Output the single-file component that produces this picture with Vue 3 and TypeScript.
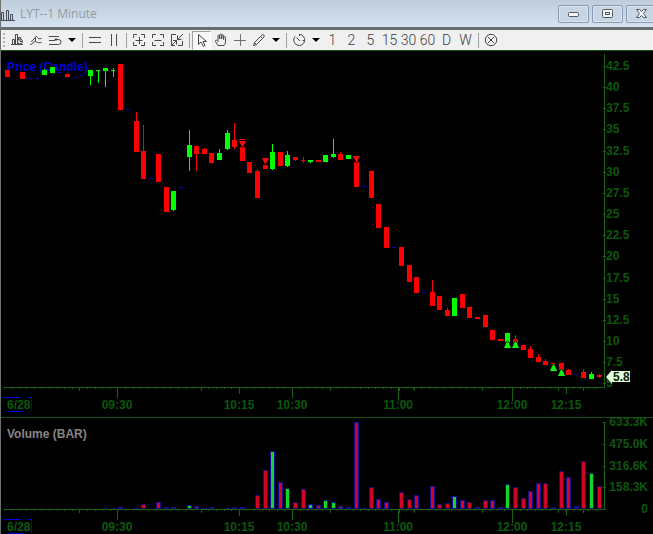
<script setup lang="ts">
type Tone = 'up' | 'down' | 'flat'
// slot, tone, body top, body bottom, wick top, wick bottom
type Candle = [number, Tone, number, number, number, number]
type Bar = [number, Tone, number]

const slotX = (slot: number): number => Math.floor(7 + slot * 7.59)

const u: Tone = 'up'
const d: Tone = 'down'
const f: Tone = 'flat'

const candles: Candle[] = [
  [0, d, 70, 77, 70, 77], [2, d, 72, 79, 72, 79], [3, f, 78, 79, 78, 79], [4, f, 78, 79, 75, 81],
  [5, u, 70, 75, 69, 75], [6, u, 67, 73, 67, 73], [7, f, 72, 73, 72, 73], [8, d, 74, 77, 74, 77],
  [9, f, 77, 78, 77, 78], [10, f, 75, 76, 75, 76], [11, u, 70, 76, 70, 85], [12, u, 70, 71, 70, 83],
  [13, u, 68, 71, 68, 87], [14, u, 70, 71, 68, 77], [15, d, 64, 110, 64, 110], [16, f, 109, 110, 109, 110],
  [17, d, 121, 152, 112, 152], [18, d, 151, 179, 125, 179], [19, f, 178, 179, 178, 179], [20, d, 154, 182, 154, 182],
  [21, d, 187, 212, 187, 212], [22, u, 191, 210, 191, 211], [23, f, 187, 188, 187, 188], [24, u, 145, 157, 130, 171],
  [25, d, 146, 154, 146, 171], [26, d, 149, 154, 148, 154], [27, d, 153, 163, 153, 163], [28, u, 153, 160, 149, 160],
  [29, u, 133, 149, 130, 150], [30, d, 140, 147, 123, 149], [31, d, 147, 161, 147, 161], [32, d, 162, 173, 162, 173],
  [33, d, 171, 198, 169, 198], [34, d, 165, 169, 165, 169], [35, u, 152, 169, 144, 170], [36, d, 152, 166, 152, 166],
  [37, u, 155, 166, 151, 167], [38, d, 157, 160, 157, 161], [39, d, 160, 161, 157, 163], [40, u, 160, 162, 160, 163],
  [41, d, 160, 162, 160, 162], [42, u, 155, 162, 155, 162], [43, u, 154, 157, 139, 158], [44, d, 154, 160, 152, 160],
  [45, u, 155, 159, 155, 159], [46, d, 162, 187, 162, 187], [47, f, 186, 187, 186, 187], [48, d, 171, 198, 171, 198],
  [49, d, 204, 228, 204, 228], [50, d, 227, 248, 227, 248], [51, f, 247, 248, 247, 248], [52, d, 247, 266, 247, 266],
  [53, d, 265, 282, 265, 282], [54, d, 277, 293, 277, 293], [55, f, 292, 293, 292, 293], [56, d, 292, 306, 280, 306],
  [57, d, 296, 310, 296, 310], [58, d, 310, 316, 308, 316], [59, u, 298, 316, 298, 316], [60, d, 294, 308, 294, 308],
  [61, d, 307, 318, 307, 318], [62, d, 317, 319, 317, 319], [63, d, 315, 327, 315, 327], [64, d, 330, 340, 330, 340],
  [65, d, 339, 341, 339, 341], [66, u, 333, 342, 333, 342], [67, d, 339, 343, 335, 343], [68, d, 345, 350, 345, 350],
  [69, d, 349, 358, 346, 358], [70, d, 357, 362, 354, 362], [71, d, 361, 365, 359, 365], [72, d, 363, 364, 363, 364],
  [73, d, 363, 370, 363, 370], [74, d, 370, 375, 369, 375], [75, f, 374, 375, 374, 375], [76, d, 372, 378, 369, 378],
  [77, u, 374, 379, 372, 379], [78, d, 375, 377, 374, 378],
]

const sellMarks: [number, number][] = [[31, 141], [34, 158], [46, 156]]
const buyMarks: [number, number][] = [[66, 348], [67, 348], [72, 371], [73, 376]]

const bars: Bar[] = [
  [13, f, 508], [14, f, 508], [15, f, 507], [17, f, 508], [18, d, 504], [20, d, 502], [21, f, 507], [22, f, 507],
  [24, u, 505], [25, d, 506], [26, f, 508], [27, f, 507], [29, f, 508], [30, f, 507], [31, f, 507], [33, d, 495],
  [34, d, 470], [35, u, 451], [36, d, 482], [37, u, 488], [38, d, 502], [39, d, 489], [40, u, 504], [41, d, 505],
  [42, u, 500], [43, u, 502], [44, d, 506], [45, f, 507], [46, d, 422], [47, f, 508], [48, d, 487], [49, d, 499],
  [50, d, 502], [52, d, 492], [53, d, 499], [54, d, 495], [56, d, 486], [57, d, 504], [58, d, 503], [59, u, 496],
  [60, d, 500], [61, d, 502], [62, f, 507], [63, d, 500], [64, d, 500], [65, f, 507], [66, u, 484], [67, d, 487],
  [68, d, 498], [69, d, 491], [70, d, 483], [71, d, 483], [72, f, 507], [73, d, 471], [74, d, 477], [75, f, 506],
  [76, d, 461], [77, u, 473], [78, d, 486],
]

const priceLabels = Array.from({ length: 16 }, (_, i) => ({
  text: String(42.5 - i * 2.5),
  y: 66 + Math.round(i * 21.15),
}))

const volumeLabels = [
  { text: '633.3K', y: 422 },
  { text: '475.0K', y: 444 },
  { text: '316.6K', y: 466 },
  { text: '158.3K', y: 487 },
  { text: '0', y: 509 },
]

const times = [
  { text: '09:30', x: 117, tick: 10 },
  { text: '10:15', x: 239, tick: 6 },
  { text: '10:30', x: 292, tick: 10 },
  { text: '11:00', x: 398, tick: 13 },
  { text: '12:00', x: 512, tick: 13 },
  { text: '12:15', x: 566, tick: 6 },
]

const minorTicks = Array.from({ length: 79 }, (_, i) => slotX(i) - 3)
const mediumTicks = [79, 201, 330, 399, 414, 482, 558, 583]

const periods = ['1', '2', '5', '15', '30', '60', 'D', 'W']
const axes = [387, 509]
</script>

<template>
  <main class="window">
    <header class="titlebar">
      <svg class="logo" width="16" height="16" viewBox="0 0 16 16" aria-hidden="true">
        <path d="M0 14.500H14M0.500 14V6.500H2.500V14M5.500 14V4.500H7.500V14M9.500 14V8.500H11.500V14" />
      </svg>
      <h1>LYT--1 Minute</h1>
      <div class="controls">
        <button type="button" aria-label="Minimize">
          <svg width="13" height="11" viewBox="0 0 13 11"><rect x="1.500" y="4.500" width="10" height="4" rx="1" /></svg>
        </button>
        <button type="button" aria-label="Restore">
          <svg width="13" height="11" viewBox="0 0 13 11"><rect x="1.500" y="1.500" width="10" height="8" rx="1" /><rect x="4.500" y="4.500" width="4" height="2" /></svg>
        </button>
        <button type="button" aria-label="Close">
          <svg width="13" height="11" viewBox="0 0 13 11"><path d="M1.500 1.500H4.500L6.500 3.500L8.500 1.500H11.500L8.500 5.500L11.500 9.500H8.500L6.500 7.500L4.500 9.500H1.500L4.500 5.500Z" /></svg>
        </button>
      </div>
    </header>

    <nav class="toolbar" aria-label="Chart tools">
      <span class="grip"></span>
      <button type="button" class="tool" aria-label="Chart style">
        <svg viewBox="0 0 16 16"><path d="M2 12.500H14M3.500 12V7.500H5.500V12M6.500 12V2.500H8.500V12M9.500 7V5.500H11.500V7" /><circle cx="11" cy="9.500" r="2.500" /><path d="M11 8V9.500H13" /></svg>
      </button>
      <button type="button" class="tool" aria-label="Studies">
        <svg viewBox="0 0 16 16"><path d="M2 12.500C5 12.500 5 9.500 7 9.500C9 9.500 9 11.500 13.500 10.500M3 9.500C5.500 9.500 6.500 4.500 8.500 4.500C9.500 4.500 9 7.500 13.500 6.500M7.500 6V9" /></svg>
      </button>
      <button type="button" class="tool" aria-label="Line settings">
        <svg viewBox="0 0 16 16"><path d="M2 4.500H12M2 8.500H8M2 12.500H9M9 12.500H11.500A2.500 2.500 0 0 0 11.500 7.500H8M9.500 6L8 7.500L9.500 9" /></svg>
      </button>
      <button type="button" class="caret" aria-label="More line settings"><svg width="8" height="4" viewBox="0 0 8 4"><path d="M0 0H8L4 4Z" /></svg></button>
      <span class="sep"></span>
      <button type="button" class="tool" aria-label="Horizontal lines"><svg viewBox="0 0 16 16"><path d="M2 5.500H14M2 10.500H14" /></svg></button>
      <button type="button" class="tool" aria-label="Vertical lines"><svg viewBox="0 0 16 16"><path d="M5.500 2V14M10.500 2V14" /></svg></button>
      <span class="sep"></span>
      <button type="button" class="tool" aria-label="Expand">
        <svg viewBox="0 0 16 16"><path d="M2.500 6V2.500H6M10 2.500H13.500V6M13.500 10V13.500H10M6 13.500H2.500V10M4.500 8.500H11.500M8.500 5V12" /></svg>
      </button>
      <button type="button" class="tool" aria-label="Compress">
        <svg viewBox="0 0 16 16"><path d="M2.500 6V2.500H6M10 2.500H13.500V6M13.500 10V13.500H10M6 13.500H2.500V10M4.500 8.500H11.500" /></svg>
      </button>
      <button type="button" class="tool" aria-label="Fit">
        <svg viewBox="0 0 16 16"><path d="M7 2.500H2.500V13.500H6M13.500 9V13.500H9M14 2L8.500 7.500M8.500 3.500V7.500H12.500M2.500 13.500L7.500 8.500M4 8.500H7.500V12.500" /></svg>
      </button>
      <span class="sep"></span>
      <button type="button" class="tool pressed" aria-label="Pointer" aria-pressed="true">
        <svg viewBox="0 0 16 16"><path d="M4.500 2.500V12.500L7 10L9.500 14.500L11 13.500L9 9.500H12.500Z" /></svg>
      </button>
      <button type="button" class="tool" aria-label="Pan">
        <svg viewBox="0 0 16 16"><path d="M5 13.500L2.500 9.500C2 8 3.500 7.500 5 9.500V4C5 2.800 6.500 2.800 6.700 4V7V3C7 1.800 8.500 1.800 8.700 3V7V3.500C9 2.300 10.500 2.500 10.600 3.700V7.500V5C11 4 12.500 4.300 12.500 5.500V10C12.500 12 11.500 12.500 11 13.500Z" /></svg>
      </button>
      <button type="button" class="tool" aria-label="Crosshair"><svg class="light" viewBox="0 0 16 16"><path d="M2 8.500H14M8.500 2V14" /></svg></button>
      <button type="button" class="tool" aria-label="Draw">
        <svg viewBox="0 0 16 16"><path d="M2.500 13.500L3.500 10.500L11 3C12 2 14 3.500 13 5L5.500 12.500Z M3.500 10.500L5.500 12.500M9.500 4.500L11.500 6.500" /></svg>
      </button>
      <button type="button" class="caret" aria-label="More drawing tools"><svg width="8" height="4" viewBox="0 0 8 4"><path d="M0 0H8L4 4Z" /></svg></button>
      <span class="sep"></span>
      <button type="button" class="tool" aria-label="Interval">
        <svg viewBox="0 0 16 16"><path d="M8 2.500A5.500 5.500 0 1 1 4 4.500M8.500 2V4M5.500 5.500L8.500 8.500M11.500 8.500H13" /><path d="M8 8.500H9" /></svg>
      </button>
      <button type="button" class="caret" aria-label="More intervals"><svg width="8" height="4" viewBox="0 0 8 4"><path d="M0 0H8L4 4Z" /></svg></button>
      <button v-for="p in periods" :key="p" type="button" class="tool period">{{ p }}</button>
      <span class="sep"></span>
      <button type="button" class="tool" aria-label="Stop">
        <svg viewBox="0 0 16 16"><circle cx="8" cy="8" r="5.700" /><path d="M5 5L11 11M11 5L5 11" /></svg>
      </button>
    </nav>

    <section class="panel" aria-label="Price">
      <svg class="chart" viewBox="1 51 652 366">
        <g class="axis">
          <rect x="604" y="54" width="1" height="334" />
          <rect v-for="l in priceLabels" :key="l.text" x="603" :y="l.y" width="3" height="1" />
        </g>
        <text v-for="l in priceLabels" :key="l.text" class="scale" x="606" :y="l.y + 4">{{ l.text }}</text>
        <text class="study" x="7" y="71">Price (Candle)</text>
        <g v-for="[slot, tone, top, bottom, high, low] in candles" :key="slot" :class="tone">
          <rect :x="slotX(slot)" :y="high" width="1" :height="low - high" />
          <rect :x="slotX(slot) - 2" :y="top" :width="bottom - top > 1 ? 5 : 4" :height="bottom - top" />
        </g>
        <rect class="down" :x="slotX(31) - 3" y="139" width="6" height="1" />
        <g v-for="[slot, y] in sellMarks" :key="slot" class="sell">
          <path :d="`M${slotX(slot) - 3} ${y}h7l-3 7h-1z`" />
          <path class="cut" :d="`M${slotX(slot) - 2} ${y + 3}l2.500 4l2.500 -4`" />
        </g>
        <g v-for="[slot, y] in buyMarks" :key="slot" class="buy">
          <path :d="`M${slotX(slot) - 3} ${y}h7l-3 -7h-1z`" />
          <path class="cut" :d="`M${slotX(slot) - 2} ${y - 4}l2.500 -3.500l2.500 3.500`" />
        </g>
        <path class="tag" d="M606 377L612 370V371H630V382H612V384Z" />
        <text class="last" x="613" y="381">5.8</text>
        <g class="axis">
          <rect x="4" :y="axes[0]" width="601" height="1" />
          <rect v-for="x in minorTicks" :key="x" :x="x" y="388" width="1" height="1" />
          <rect v-for="x in mediumTicks" :key="'m' + x" :x="x" y="388" width="1" height="3" />
          <rect v-for="t in times" :key="t.text" :x="t.x" y="388" width="1" :height="t.tick" />
        </g>
        <text v-for="t in times" :key="t.text" class="time" :x="t.x" y="409">{{ t.text }}</text>
        <text class="date" x="7" y="409">6/28</text>
        <path class="datebox" d="M4 397.500H21M28 397.500H31.500V411M7 411.500H24" />
      </svg>
    </section>

    <section class="panel" aria-label="Volume">
      <svg class="chart" viewBox="1 418 652 116">
        <g class="axis">
          <rect x="4" :y="axes[1]" width="602" height="1" />
          <rect x="604" y="422" width="1" height="88" />
          <rect v-for="l in volumeLabels" :key="l.text" x="603" :y="l.y" width="3" height="1" />
          <rect v-for="x in minorTicks" :key="x" :x="x" y="510" width="1" height="1" />
          <rect v-for="x in mediumTicks" :key="'m' + x" :x="x" y="510" width="1" height="3" />
          <rect v-for="t in times" :key="t.text" :x="t.x" y="510" width="1" :height="t.tick" />
        </g>
        <text class="volume" x="7" y="438">Volume (BAR)</text>
        <text v-for="l in volumeLabels" :key="l.text" class="scale end" x="648" :y="l.y + 4">{{ l.text }}</text>
        <g v-for="[slot, tone, top] in bars" :key="slot" :class="'vol-' + tone">
          <rect class="edge" :x="slotX(slot) - 2" :y="top" width="5" :height="509 - top" />
          <rect v-if="tone !== 'flat'" :x="slotX(slot) - 1" :y="top + 1" width="3" :height="Math.max(1, 507 - top)" />
        </g>
        <text v-for="t in times" :key="t.text" class="time" :x="t.x" y="531">{{ t.text }}</text>
        <text class="date" x="7" y="531">6/28</text>
        <path class="datebox" d="M4 519.500H21M28 519.500H31.500V533M7 533.500H24" />
      </svg>
    </section>
  </main>
</template>

<style>
body {
  background: #000;
}
</style>

<style scoped>
.window {
  min-height: 100vh;
  overflow: hidden;
  background: #000;
  box-sizing: border-box;
  border-left: 1px solid #707070;
  font-family: "Liberation Sans", Arial, sans-serif;
}
button {
  margin: 0;
  padding: 0;
  border: 0;
  background: none;
  font: inherit;
  color: #3c3c44;
}
.titlebar {
  display: flex;
  align-items: center;
  height: 27px;
  border-bottom: 3px solid #696c70;
  background: linear-gradient(#bfccd9, #d5e2f1);
}
.logo {
  flex: none;
  fill: none;
  stroke: #454b55;
}
h1 {
  flex: 1;
  margin: 0 0 0 3px;
  font: 400 12px/20px "Open Sans", "Noto Sans", sans-serif;
  color: #929aa4;
}
.controls {
  display: flex;
  gap: 3px;
  margin-right: -4px;
}
.controls button {
  display: flex;
  align-items: center;
  justify-content: center;
  width: 31px;
  height: 18px;
  box-sizing: border-box;
  border: 1px solid #8799b0;
  border-radius: 2px;
  background: #c7d5e5;
  box-shadow: inset 0 0 0 1px #d9e5f1;
}
.controls svg {
  fill: #f6f8fa;
  stroke: #50565f;
}
.toolbar {
  display: flex;
  align-items: center;
  height: 20px;
  background: #f0f0f0;
  border-bottom: 1px solid #145014;
}
.grip {
  flex: none;
  height: 14px;
  margin: 0 2px;
  border-left: 2px dotted #b4b4b4;
}
.tool,
.caret {
  display: flex;
  flex: none;
  align-items: center;
  justify-content: center;
  height: 20px;
  width: 19px;
}
.tool svg {
  flex: none;
  width: 16px;
  height: 16px;
  fill: none;
  stroke: #484850;
  stroke-width: 1;
}
.tool .light {
  stroke: #707078;
}
.tool.pressed {
  box-sizing: border-box;
  height: 19px;
  border: 1px solid #a0a0a0;
  border-right-color: #fff;
  border-bottom-color: #fff;
  background: #f7f7f7;
}
.caret {
  width: 15px;
}
.caret svg {
  fill: #000;
}
.period {
  font: 300 14px/20px Roboto, "Liberation Sans", sans-serif;
}
.sep {
  flex: none;
  width: 1px;
  height: 15px;
  margin: 0 2px 0 3px;
  background: #a0a0a0;
}
.panel + .panel {
  border-top: 1px solid #145014;
}
.chart {
  display: block;
  width: 100%;
  height: auto;
  overflow: visible;
  font-size: 12px;
  font-weight: 700;
}
.chart rect {
  shape-rendering: crispEdges;
}
.axis {
  fill: #146414;
}
.scale,
.time,
.date {
  fill: #0c580c;
}
.time {
  text-anchor: middle;
}
.end {
  text-anchor: end;
}
.study {
  fill: #0000d8;
}
.volume {
  fill: #868686;
}
.up {
  fill: #00ff00;
}
.down {
  fill: #ff0000;
}
.flat {
  fill: #0000c8;
}
.sell {
  fill: #e81010;
}
.buy {
  fill: #14f014;
}
.cut {
  fill: none;
  stroke: #300;
}
.buy .cut {
  stroke: #030;
}
.tag {
  fill: #dcffd4;
}
.last {
  fill: #102010;
}
.datebox {
  fill: none;
  stroke: #0000e0;
}
.edge {
  fill: #140c8c;
}
.vol-up {
  fill: #14d42c;
}
.vol-down {
  fill: #d00424;
}
</style>
